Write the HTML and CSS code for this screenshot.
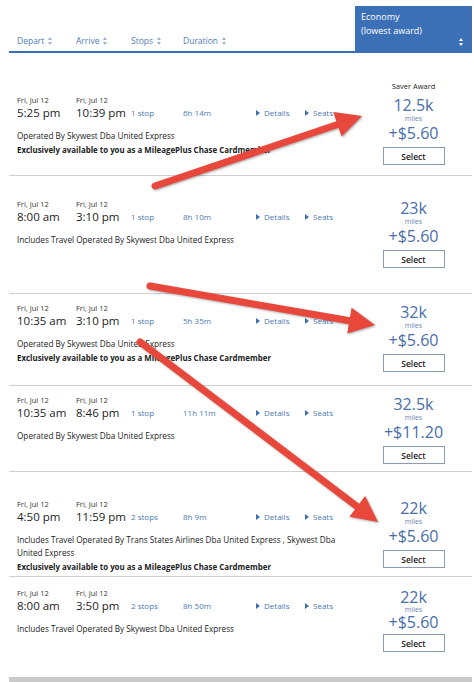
FILE: index.html
```html
<!DOCTYPE html>
<html lang="en">
<head>
<meta charset="utf-8">
<title>Flight results</title>
<link rel="stylesheet" href="styles.css">
</head>
<body>
<div class="page">
  <div class="head">
    <div class="head-cols">
      <span class="hcol">Depart <i class="sort"></i></span>
      <span class="hcol">Arrive <i class="sort"></i></span>
      <span class="hcol">Stops <i class="sort"></i></span>
      <span class="hcol">Duration <i class="sort"></i></span>
    </div>
    <div class="head-fare">
      <div>Economy</div>
      <div>(lowest award)</div>
      <i class="sort sort-white"></i>
    </div>
  </div>

  <div class="row r1">
    <div class="info with-label">
      <div class="line">
        <div class="when"><div class="date">Fri, Jul 12</div><div class="time">5:25 pm</div></div>
        <div class="when"><div class="date">Fri, Jul 12</div><div class="time">10:39 pm</div></div>
        <div class="link">1 stop</div>
        <div class="link">6h 14m</div>
        <div class="link"><i class="tri"></i>Details</div>
        <div class="link"><i class="tri"></i>Seats</div>
      </div>
      <div class="note">Operated By Skywest Dba United Express</div>
      <div class="note bold">Exclusively available to you as a MileagePlus Chase Cardmember</div>
    </div>
    <div class="fare">
      <div class="fare-label">Saver Award</div>
      <div class="miles">12.5k</div>
      <div class="unit">miles</div>
      <div class="price">+$5.60</div>
      <button class="select">Select</button>
    </div>
  </div>

  <div class="row r2">
    <div class="info">
      <div class="line">
        <div class="when"><div class="date">Fri, Jul 12</div><div class="time">8:00 am</div></div>
        <div class="when"><div class="date">Fri, Jul 12</div><div class="time">3:10 pm</div></div>
        <div class="link">1 stop</div>
        <div class="link">8h 10m</div>
        <div class="link"><i class="tri"></i>Details</div>
        <div class="link"><i class="tri"></i>Seats</div>
      </div>
      <div class="note">Includes Travel Operated By Skywest Dba United Express</div>
    </div>
    <div class="fare">
      <div class="miles">23k</div>
      <div class="unit">miles</div>
      <div class="price">+$5.60</div>
      <button class="select">Select</button>
    </div>
  </div>

  <div class="row r3">
    <div class="info">
      <div class="line">
        <div class="when"><div class="date">Fri, Jul 12</div><div class="time">10:35 am</div></div>
        <div class="when"><div class="date">Fri, Jul 12</div><div class="time">3:10 pm</div></div>
        <div class="link">1 stop</div>
        <div class="link">5h 35m</div>
        <div class="link"><i class="tri"></i>Details</div>
        <div class="link"><i class="tri"></i>Seats</div>
      </div>
      <div class="note">Operated By Skywest Dba United Express</div>
      <div class="note bold">Exclusively available to you as a MileagePlus Chase Cardmember</div>
    </div>
    <div class="fare">
      <div class="miles">32k</div>
      <div class="unit">miles</div>
      <div class="price">+$5.60</div>
      <button class="select">Select</button>
    </div>
  </div>

  <div class="row r4">
    <div class="info">
      <div class="line">
        <div class="when"><div class="date">Fri, Jul 12</div><div class="time">10:35 am</div></div>
        <div class="when"><div class="date">Fri, Jul 12</div><div class="time">8:46 pm</div></div>
        <div class="link">1 stop</div>
        <div class="link">11h 11m</div>
        <div class="link"><i class="tri"></i>Details</div>
        <div class="link"><i class="tri"></i>Seats</div>
      </div>
      <div class="note">Operated By Skywest Dba United Express</div>
    </div>
    <div class="fare">
      <div class="miles">32.5k</div>
      <div class="unit">miles</div>
      <div class="price">+$11.20</div>
      <button class="select">Select</button>
    </div>
  </div>

  <div class="row r5">
    <div class="info">
      <div class="line">
        <div class="when"><div class="date">Fri, Jul 12</div><div class="time">4:50 pm</div></div>
        <div class="when"><div class="date">Fri, Jul 12</div><div class="time">11:59 pm</div></div>
        <div class="link">2 stops</div>
        <div class="link">8h 9m</div>
        <div class="link"><i class="tri"></i>Details</div>
        <div class="link"><i class="tri"></i>Seats</div>
      </div>
      <div class="note">Includes Travel Operated By Trans States Airlines Dba United Express , Skywest Dba United Express</div>
      <div class="note bold">Exclusively available to you as a MileagePlus Chase Cardmember</div>
    </div>
    <div class="fare">
      <div class="miles">22k</div>
      <div class="unit">miles</div>
      <div class="price">+$5.60</div>
      <button class="select">Select</button>
    </div>
  </div>

  <div class="row r6">
    <div class="info">
      <div class="line">
        <div class="when"><div class="date">Fri, Jul 12</div><div class="time">8:00 am</div></div>
        <div class="when"><div class="date">Fri, Jul 12</div><div class="time">3:50 pm</div></div>
        <div class="link">2 stops</div>
        <div class="link">8h 50m</div>
        <div class="link"><i class="tri"></i>Details</div>
        <div class="link"><i class="tri"></i>Seats</div>
      </div>
      <div class="note">Includes Travel Operated By Skywest Dba United Express</div>
    </div>
    <div class="fare tight">
      <div class="miles">22k</div>
      <div class="unit">miles</div>
      <div class="price">+$5.60</div>
      <button class="select">Select</button>
    </div>
  </div>

  <svg class="arrows" width="474" height="682" viewBox="0 0 474 682" aria-hidden="true">
    <g class="arrow">
      <line x1="155" y1="186" x2="339" y2="124"/>
      <polygon points="362,116 341.6,136.6 333.2,112"/>
    </g>
    <g class="arrow">
      <line x1="150" y1="286" x2="351" y2="321"/>
      <polygon points="375,325 347.2,333.4 351.6,307.8"/>
    </g>
    <g class="arrow">
      <line x1="140" y1="342" x2="359" y2="508"/>
      <polygon points="378,522 349.4,516.7 365.1,495.9"/>
    </g>
  </svg>
</div>
</body>
</html>
```

FILE: styles.css
```css
* { box-sizing: border-box; }

html, body {
  margin: 0;
  padding: 0;
  background: #fff;
}

body {
  font-family: "Open Sans", "Liberation Sans", sans-serif;
  color: #222;
}

.page {
  position: relative;
  width: 474px;
  height: 682px;
  padding: 0 2px 0 9px;
  overflow: hidden;
}

/* header */
.head {
  display: flex;
  height: 53px;
  padding-top: 6px;
}

.head-cols {
  flex: 1;
  display: grid;
  grid-template-columns: 59px 55px 52px 1fr;
  align-items: end;
  padding: 0 0 4px 8px;
  border-bottom: 2px solid #3b6fb4;
  font-size: 8.5px;
  color: #4f7cb8;
}

.hcol {
  display: flex;
  align-items: center;
  gap: 3px;
  line-height: 12px;
}

.sort {
  display: inline-block;
  width: 5px;
  height: 8px;
  position: relative;
}
.sort::before,
.sort::after {
  content: "";
  position: absolute;
  left: 0.5px;
  border-left: 2px solid transparent;
  border-right: 2px solid transparent;
}
.sort::before {
  top: 0;
  border-bottom: 3px solid #9fb3cf;
}
.sort::after {
  bottom: 0;
  border-top: 3px solid #9fb3cf;
}
.sort-white::before { border-bottom-color: #fff; }
.sort-white::after { border-top-color: #fff; }

.head-fare {
  position: relative;
  width: 117px;
  background: #3b70b6;
  color: #fff;
  font-size: 9px;
  line-height: 14px;
  padding: 4px 6px;
}
.head-fare .sort {
  position: absolute;
  right: 9px;
  bottom: 7px;
}

/* rows */
.row {
  display: flex;
  align-items: flex-start;
  border-bottom: 1px solid #cfcfcf;
  padding-left: 8px;
}
.r1 { height: 123px; padding-top: 27px; }
.r2 { height: 118px; padding-top: 23px; }
.r3 { height: 92px; padding-top: 9px; }
.r4 { height: 86px; padding-top: 9px; }
.r5 { height: 105px; padding-top: 27px; }
.r6 { height: 105px; padding-top: 11px; border-bottom: 5px solid #c9c9c9; }

.info {
  flex: 1;
  padding-right: 12px;
}
.info.with-label { padding-top: 15px; }

.line {
  display: grid;
  grid-template-columns: 59px 55px 52px 73px 49px 1fr;
  align-items: end;
  margin-bottom: 9px;
}

.date {
  font-size: 7.5px;
  line-height: 10px;
  color: #333;
  white-space: nowrap;
}
.time {
  font-size: 11.5px;
  line-height: 15px;
  color: #222;
  white-space: nowrap;
}

.link {
  font-size: 8px;
  line-height: 12px;
  color: #4a79b5;
  display: flex;
  align-items: center;
  padding-bottom: 1px;
  white-space: nowrap;
}

.tri {
  display: inline-block;
  width: 0;
  height: 0;
  border-left: 4px solid #3f6fae;
  border-top: 3px solid transparent;
  border-bottom: 3px solid transparent;
  margin-right: 4px;
}

.note {
  font-size: 8.2px;
  line-height: 13px;
  color: #222;
}
.note.bold {
  font-size: 7.9px;
  font-weight: 700;
  margin-top: 2px;
}

/* fare column */
.fare {
  width: 117px;
  display: flex;
  flex-direction: column;
  align-items: center;
  color: #4a6ea8;
}
.fare-label {
  font-size: 7.5px;
  line-height: 12px;
  color: #222;
  margin-bottom: 4px;
}
.miles,
.price {
  font-size: 16px;
  line-height: 18px;
}
.unit {
  font-size: 7px;
  line-height: 10px;
  color: #6a86b4;
}
.tight .unit { line-height: 7px; }
.tight .select { margin-top: 3px; }

.select {
  margin-top: 5px;
  width: 62px;
  height: 18px;
  padding: 0;
  background: #fff;
  border: 1px solid #8a9aaf;
  border-radius: 0;
  font-family: "Open Sans", "Liberation Sans", sans-serif;
  font-size: 8.5px;
  font-weight: 600;
  color: #222;
}

/* annotation arrows */
.arrows {
  position: absolute;
  left: 0;
  top: 0;
  pointer-events: none;
  filter: drop-shadow(1px 1px 1px rgba(0, 0, 0, 0.35));
}
.arrow line {
  stroke: #e8473b;
  stroke-width: 7;
  stroke-linecap: round;
}
.arrow polygon {
  fill: #e8473b;
}
```
